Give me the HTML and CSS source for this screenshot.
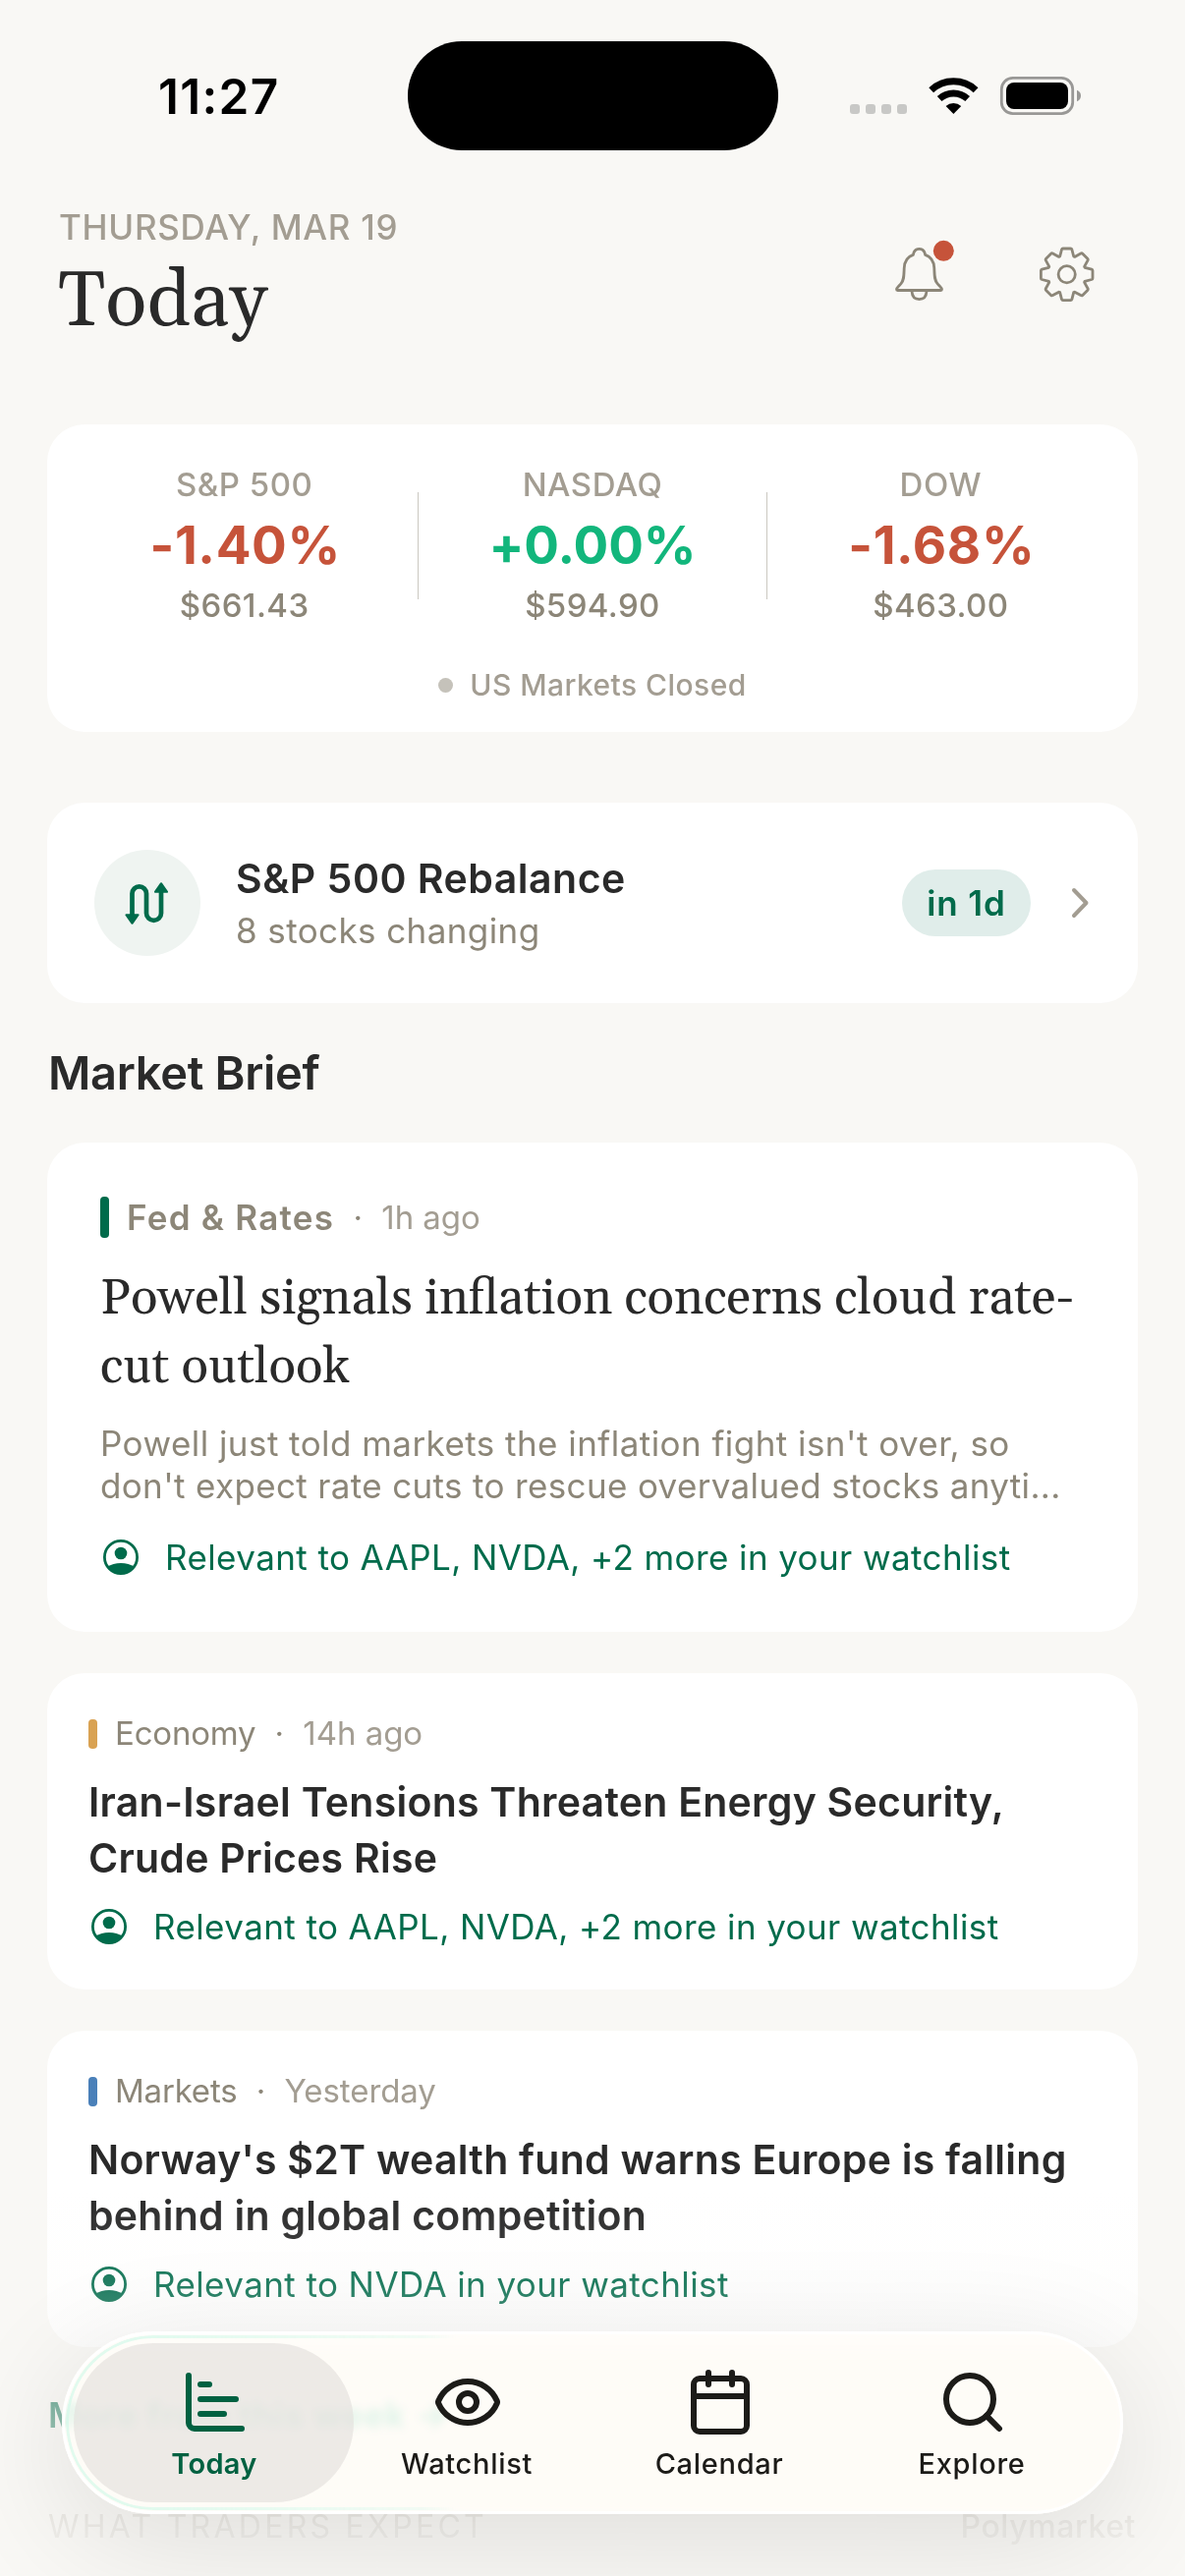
FILE: index.html
```html
<!DOCTYPE html>
<html lang="en">
<head>
  <meta charset="utf-8">
  <title>Today</title>
  <link rel="stylesheet" href="styles.css">
</head>
<body>
  <svg class="sprite" aria-hidden="true">
    <symbol id="person" viewBox="0 0 42 42">
      <circle cx="21" cy="21" r="16.6" fill="none" stroke="currentColor" stroke-width="2.8"/>
      <circle cx="21" cy="17" r="6.3" fill="currentColor"/>
      <path d="M7 31Q13 27 21 27T35 31L33 33A17 17 0 0 1 9 33Z" fill="currentColor"/>
    </symbol>
  </svg>

  <div class="screen">
    <div class="status-bar">
      <div class="clock">11:27</div>
      <div class="island"></div>
      <svg class="status-icons" viewBox="0 0 245 54">
        <g fill="#c8c8c6">
          <rect x="5" y="36" width="10" height="10" rx="3"/>
          <rect x="21" y="36" width="10" height="10" rx="3"/>
          <rect x="37" y="36" width="10" height="10" rx="3"/>
          <rect x="53" y="36" width="10" height="10" rx="3"/>
        </g>
        <path d="M87.7 21.7A33.3 33.3 0 0 1 133.1 21.7" fill="none" stroke="#000" stroke-width="7"/>
        <path d="M96.1 30.6A21 21 0 0 1 124.7 30.6" fill="none" stroke="#000" stroke-width="6.8"/>
        <path d="M110.4 46L102.6 38A11.7 11.7 0 0 1 118.2 38Z"/>
        <rect x="159.3" y="9.3" width="72.4" height="36.4" rx="11.5" fill="none" stroke="#999896" stroke-width="2.8"/>
        <rect x="164" y="14" width="63" height="27" rx="8"/>
        <path d="M236 21.8Q240 23.5 240 27.5T236 33.2Z" fill="#999896"/>
      </svg>
    </div>

    <header class="header">
      <div>
        <div class="date">THURSDAY, MAR 19</div>
        <h1 class="title">Today</h1>
      </div>
      <div class="actions">
        <svg class="action" viewBox="0 0 72 72">
          <g fill="none" stroke="#8c8678" stroke-width="2.8" stroke-linejoin="round">
            <path d="M30.5 13.3C27 13.3 25 15.6 24.3 19.4C18 21.6 15.5 26 15.2 33C14.9 41 15.1 45 12 48.6C9.5 51.5 7.5 53 7.5 54.6Q7.5 55.5 8.5 55.5H52.5Q53.5 55.5 53.5 54.6C53.5 53 51.5 51.5 49 48.6C45.9 45 46.1 41 45.8 33C45.5 26 43 21.6 36.7 19.4C36 15.6 34 13.3 30.5 13.3Z"/>
            <path d="M23 56.5C23.3 61.5 26 64.6 30.5 64.6S37.7 61.5 38 56.5"/>
          </g>
          <circle cx="55.3" cy="15.3" r="10.5" fill="#c6533a"/>
        </svg>
        <svg class="action" viewBox="0 0 72 72">
          <g transform="translate(35.7 39.3)" fill="none" stroke="#8c8678" stroke-width="2.8" stroke-linejoin="round">
            <path d="M-7-18.3L-5.2-25.3Q-4.9-26.3-3.9-26.3H3.9Q4.9-26.3 5.2-25.3L7-18.3L8-17.9L14.2-21.3Q15.3-21.9 16.1-21.1L21.1-16.1Q21.9-15.3 21.3-14.2L17.9-8L18.3-7L25.3-5.2Q26.3-4.9 26.3-3.9V3.9Q26.3 4.9 25.3 5.2L18.3 7L17.9 8L21.3 14.2Q21.9 15.3 21.1 16.1L16.1 21.1Q15.3 21.9 14.2 21.3L8 17.9L7 18.3L5.2 25.3Q4.9 26.3 3.9 26.3H-3.9Q-4.9 26.3-5.2 25.3L-7 18.3L-8 17.9L-14.2 21.3Q-15.3 21.9-16.1 21.1L-21.1 16.1Q-21.9 15.3-21.3 14.2L-17.9 8L-18.3 7L-25.3 5.2Q-26.3 4.9-26.3 3.9V-3.9Q-26.3-4.9-25.3-5.2L-18.3-7L-17.9-8L-21.3-14.2Q-21.9-15.3-21.1-16.1L-16.1-21.1Q-15.3-21.9-14.2-21.3L-8-17.9Z"/>
            <circle r="8.6"/>
          </g>
        </svg>
      </div>
    </header>

    <section class="card indices">
      <div class="index-row">
        <div class="index">
          <div class="index-name">S&amp;P 500</div>
          <div class="index-change down">-1.40%</div>
          <div class="index-price">$661.43</div>
        </div>
        <div class="divider"></div>
        <div class="index">
          <div class="index-name">NASDAQ</div>
          <div class="index-change up">+0.00%</div>
          <div class="index-price">$594.90</div>
        </div>
        <div class="divider"></div>
        <div class="index">
          <div class="index-name">DOW</div>
          <div class="index-change down">-1.68%</div>
          <div class="index-price">$463.00</div>
        </div>
      </div>
      <div class="market-status"><span class="status-dot"></span>US Markets Closed</div>
    </section>

    <section class="card rebalance">
      <svg class="rebalance-icon" viewBox="0 0 108 108">
        <circle cx="54" cy="54" r="54" fill="#eff4f1"/>
        <path d="M38.5 66V44.6A7.25 7.25 0 0 1 53 44.6V64.4A7.5 7.5 0 0 0 68 64.4V43" fill="none" stroke="#006b4b" stroke-width="4.7"/>
        <path d="M32.4 66.2H44.6L38.5 74.8ZM61.9 42.8H74.1L68 34.2Z" fill="#006b4b" stroke="#006b4b" stroke-width="2" stroke-linejoin="round"/>
      </svg>
      <div class="rebalance-text">
        <div class="rebalance-title">S&amp;P 500 Rebalance</div>
        <div class="rebalance-sub">8 stocks changing</div>
      </div>
      <div class="pill">in 1d</div>
      <svg class="chevron" viewBox="0 0 24 36">
        <path d="M5 5L17.5 18L5 31" fill="none" stroke="#a39d92" stroke-width="4" stroke-linecap="round" stroke-linejoin="round"/>
      </svg>
    </section>

    <h2 class="section-title">Market Brief</h2>

    <article class="card story lead">
      <div class="meta">
        <span class="tag green"></span><span class="topic">Fed &amp; Rates</span><span class="dot">·</span><span class="time">1h ago</span>
      </div>
      <h3 class="headline">Powell signals inflation concerns cloud rate-<br>cut outlook</h3>
      <p class="summary">Powell just told markets the inflation fight isn't over, so<br><span class="summary-tail">don't expect rate cuts to rescue overvalued stocks anyti...</span></p>
      <div class="relevant"><svg><use href="#person"/></svg>Relevant to AAPL, NVDA, +2 more in your watchlist</div>
    </article>

    <article class="card story">
      <div class="meta">
        <span class="tag amber"></span><span class="topic">Economy</span><span class="dot">·</span><span class="time">14h ago</span>
      </div>
      <h3 class="headline">Iran-Israel Tensions Threaten Energy Security,<br>Crude Prices Rise</h3>
      <div class="relevant"><svg><use href="#person"/></svg>Relevant to AAPL, NVDA, +2 more in your watchlist</div>
    </article>

    <article class="card story">
      <div class="meta">
        <span class="tag blue"></span><span class="topic">Markets</span><span class="dot">·</span><span class="time">Yesterday</span>
      </div>
      <h3 class="headline">Norway's $2T wealth fund warns Europe is falling<br>behind in global competition</h3>
      <div class="relevant"><svg><use href="#person"/></svg>Relevant to NVDA in your watchlist</div>
    </article>

    <div class="more">More from this week →</div>
    <div class="expect"><span class="expect-title">WHAT TRADERS EXPECT</span><span class="expect-source">Polymarket</span></div>

    <div class="fade"></div>

    <nav class="tab-bar">
      <div class="tab active">
        <svg viewBox="0 0 24 24"><path d="M3 3v16a2 2 0 0 0 2 2h16M7 16h8M7 11h12M7 6h3"/></svg>
        <span>Today</span>
      </div>
      <div class="tab">
        <svg viewBox="0 0 24 24"><path d="M2.062 12.348a1 1 0 0 1 0-.696 10.75 10.75 0 0 1 19.876 0 1 1 0 0 1 0 .696 10.75 10.75 0 0 1-19.876 0"/><circle cx="12" cy="12" r="3"/></svg>
        <span>Watchlist</span>
      </div>
      <div class="tab">
        <svg viewBox="0 0 24 24"><path d="M8 2v4M16 2v4M3 10h18"/><rect width="18" height="18" x="3" y="4" rx="2"/></svg>
        <span>Calendar</span>
      </div>
      <div class="tab">
        <svg viewBox="0 0 24 24"><path d="m21 21-4.34-4.34"/><circle cx="11" cy="11" r="8"/></svg>
        <span>Explore</span>
      </div>
    </nav>
  </div>
</body>
</html>
```

FILE: styles.css
```css
* {
  box-sizing: border-box;
  margin: 0;
  padding: 0;
}

body {
  background: #f9f8f5;
  color: #2a2a2a;
  font-family: Inter, "Liberation Sans", sans-serif;
}

.sprite {
  display: none;
}

.screen {
  position: relative;
  width: 1206px;
  height: 2622px;
  padding: 0 48px;
  overflow: hidden;
  white-space: nowrap;
}

/* Status bar */
.status-bar {
  display: grid;
  grid-template-columns: 415px 377px 1fr;
  align-items: center;
  height: 194px;
  margin: 0 -48px;
}

.clock {
  padding: 2px 0 0 161px;
  color: #000;
  font-size: 49.5px;
  font-weight: 600;
  line-height: 60px;
  letter-spacing: 1.3px;
}

.island {
  height: 111px;
  border-radius: 55px;
  background: #000;
}

.status-icons {
  width: 245px;
  height: 54px;
  margin-left: 68px;
}

/* Header */
.header {
  display: flex;
  justify-content: space-between;
  padding: 15px 36px 78px 12px;
}

.date {
  color: #a39d92;
  font-size: 35px;
  font-weight: 450;
  line-height: 44px;
  letter-spacing: 0.7px;
}

.title {
  margin: 11px 0 0 -1px;
  font-family: Gelasio, Georgia, "Liberation Serif", serif;
  font-size: 78px;
  font-weight: 400;
  line-height: 90px;
}

.actions {
  display: flex;
  gap: 73px;
  margin-top: 31px;
}

.action {
  width: 72px;
  height: 72px;
}

/* Cards */
.card {
  border-radius: 38px;
  background: #fff;
}

.indices {
  height: 313px;
  padding: 41px 24px 0;
}

.index-row {
  display: grid;
  grid-template-columns: 1fr 1px 1fr 1px 1fr;
  text-align: center;
}

.divider {
  height: 109px;
  margin-top: 28px;
  background: #cbc8c1;
}

.index-name {
  color: #a39d92;
  font-size: 33px;
  font-weight: 450;
  line-height: 40px;
  letter-spacing: 0.5px;
}

.index-change {
  margin-top: 10px;
  padding-left: 2px;
  font-size: 53px;
  font-weight: 700;
  line-height: 64px;
  letter-spacing: 0.6px;
}

.down {
  color: #c6533a;
}

.up {
  color: #12b67c;
  padding-left: 0;
  letter-spacing: -0.1px;
}

.index-price {
  margin-top: 9px;
  color: #8c8678;
  font-size: 33px;
  font-weight: 500;
  line-height: 40px;
  letter-spacing: 0.4px;
}

.market-status {
  display: flex;
  align-items: center;
  justify-content: center;
  gap: 17px;
  margin-top: 43px;
  color: #a39d92;
  font-size: 30px;
  font-weight: 500;
  line-height: 36px;
  letter-spacing: 0.45px;
}

.status-dot {
  width: 15px;
  height: 15px;
  border-radius: 50%;
  background: #c5c2ba;
}

.rebalance {
  display: flex;
  align-items: center;
  height: 204px;
  margin-top: 72px;
  padding: 0 46px 0 48px;
}

.rebalance-icon {
  width: 108px;
  height: 108px;
}

.rebalance-text {
  flex: 1;
  margin-left: 36px;
}

.rebalance-title {
  font-size: 41px;
  font-weight: 600;
  line-height: 50px;
  letter-spacing: 0.5px;
}

.rebalance-sub {
  margin-top: 6px;
  color: #8c8678;
  font-size: 35px;
  line-height: 44px;
  letter-spacing: 0.4px;
}

.pill {
  width: 131px;
  margin-right: 39px;
  border-radius: 34px;
  background: #e0edea;
  color: #006b4b;
  font-size: 35px;
  font-weight: 600;
  line-height: 68px;
  letter-spacing: 0.9px;
  text-align: center;
}

.chevron {
  width: 24px;
  height: 36px;
}

.section-title {
  margin: 43px 0 43px 1px;
  font-size: 47px;
  font-weight: 600;
  line-height: 56px;
  letter-spacing: -0.3px;
}

/* Stories */
.story {
  margin-top: 42px;
  padding: 41px 42px 42px;
}

.meta {
  display: flex;
  align-items: center;
  color: #a39d92;
  font-size: 33px;
  line-height: 40px;
}

.tag {
  width: 9px;
  height: 30px;
  margin: 2px 18px 0 0;
  border-radius: 4px;
}

.green {
  background: #006b4b;
}

.amber {
  background: #d9a253;
}

.blue {
  background: #4a80b9;
}

.topic {
  color: #8c8678;
  letter-spacing: -0.2px;
}

.time {
  letter-spacing: -0.05px;
}

.dot {
  width: 48px;
  color: #8c8678;
  text-align: center;
}

.story .headline {
  margin-top: 22px;
  font-size: 41px;
  font-weight: 600;
  line-height: 57px;
  letter-spacing: 0.26px;
}

.relevant {
  display: flex;
  align-items: center;
  gap: 24px;
  margin-top: 19px;
  color: #006b4b;
  font-size: 35px;
  line-height: 44px;
  letter-spacing: 0.41px;
}

.relevant svg {
  width: 42px;
  height: 42px;
}

.lead {
  padding: 55px 54px 54px;
}

.lead .meta {
  line-height: 40px;
  height: 42px;
}

.lead .tag {
  height: 42px;
  margin-top: 0;
}

.lead .topic {
  font-size: 35px;
  font-weight: 600;
  letter-spacing: 1.25px;
}

.lead .headline {
  margin: 27px 0 -3px;
  font-family: Gelasio, Georgia, "Liberation Serif", serif;
  font-size: 51px;
  font-weight: 400;
  line-height: 70px;
  letter-spacing: 0;
}

.summary {
  margin-top: 24px;
  color: #8c8678;
  font-size: 35px;
  line-height: 43px;
  letter-spacing: 0.45px;
}

.summary-tail {
  letter-spacing: 0.35px;
}

.lead .relevant {
  margin-top: 29px;
}

.more {
  margin: 47px 0 0 1px;
  color: #006b4b;
  font-size: 35px;
  font-weight: 600;
  line-height: 44px;
  letter-spacing: 0.97px;
}

.expect {
  display: flex;
  justify-content: space-between;
  margin: 72px 2px 0 1px;
  color: #a39d92;
  font-size: 32px;
  line-height: 40px;
}

.expect-title {
  letter-spacing: 3.27px;
}

.expect-source {
  font-weight: 500;
  letter-spacing: 0.58px;
}

/* Content dissolves into the page colour behind the floating bar */
.fade {
  position: absolute;
  inset: 2230px 0 0;
  background: linear-gradient(rgba(249, 248, 245, 0), rgba(249, 248, 245, 0.14) 24%, rgba(249, 248, 245, 0.55) 58%, rgba(249, 248, 245, 0.88) 88%, rgba(249, 248, 245, 0.95));
}

/* Floating tab bar */
.tab-bar {
  position: absolute;
  left: 63px;
  top: 2373px;
  display: grid;
  grid-template-columns: 285px repeat(3, 257px);
  width: 1080px;
  height: 186px;
  padding: 12px;
  border-radius: 93px;
  background: rgba(255, 253, 249, 0.8);
  box-shadow: inset 0 0 0 3px rgba(255, 255, 255, 0.9), 0 26px 125px rgba(0, 0, 0, 0.11);
  backdrop-filter: blur(5px) saturate(2.6);
}

/* Green tint picked up along the glass rim */
.tab-bar::before {
  content: "";
  position: absolute;
  inset: 4px;
  border: 3px solid rgba(205, 248, 232, 0.6);
  border-radius: 89px;
  mask-image: linear-gradient(90deg, #000 8%, rgba(0, 0, 0, 0.45) 34%, transparent 37%);
}

.tab {
  display: flex;
  flex-direction: column;
  align-items: center;
  margin-left: -28px;
  padding-top: 24px;
  border-radius: 81px;
  color: #1c1b18;
  font-size: 29px;
  font-weight: 500;
  line-height: 36px;
  letter-spacing: 0.7px;
}

.tab svg {
  width: 72px;
  height: 72px;
  margin-left: 3px;
  fill: none;
  stroke: currentColor;
  stroke-width: 2;
  stroke-linecap: round;
  stroke-linejoin: round;
}

.tab span {
  margin: 9px 0 0 1px;
}

.active {
  margin-left: 0;
  background: rgba(226, 223, 220, 0.62);
  color: #006141;
  font-weight: 600;
  letter-spacing: 0.3px;
}
```
